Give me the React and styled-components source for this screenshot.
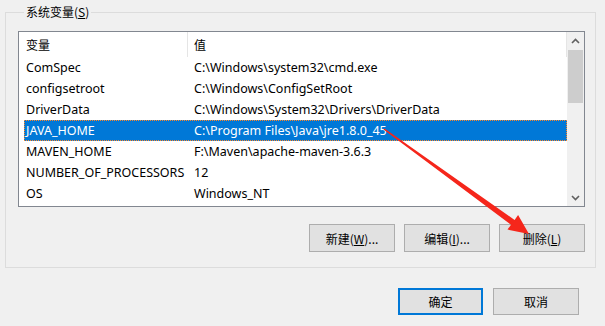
import React from "react";
import styled, { createGlobalStyle } from "styled-components";

const GlobalStyle = createGlobalStyle`
  html, body {
    margin: 0;
    padding: 0;
    background: #f0f0f0;
  }
  body {
    font-family: "Noto Sans", "Noto Sans CJK SC", sans-serif;
    font-size: 12px;
    color: #000;
  }
`;

const Dialog = styled.div`
  position: relative;
  width: 605px;
  height: 326px;
  box-sizing: border-box;
  padding: 3px 9px 0 5px;
  background: #f0f0f0;
  overflow: hidden;
`;

const GroupBox = styled.fieldset`
  margin: 0;
  padding: 0 10px 15px 12px;
  border: 1px solid #dcdcdc;
  min-width: 0;
`;

const Legend = styled.legend`
  padding: 0 2px;
  margin-left: 6px;
  line-height: 18px;
  font-family: "Noto Sans CJK SC", sans-serif;
`;

const ListBox = styled.div`
  margin-top: 10px;
  height: 176px;
  box-sizing: border-box;
  border: 1px solid #828790;
  background: #fff;
  display: flex;
`;

const ListBody = styled.div`
  flex: 1;
  min-width: 0;
  padding-left: 5px;
  font-size: 12.5px;
`;

const HeaderRow = styled.div`
  display: grid;
  grid-template-columns: 164px 1fr;
  height: 25px;
`;

const HeaderCell = styled.div`
  display: flex;
  align-items: center;
  padding-left: ${(p) => p.$pad}px;
  border-right: 1px solid #e5e5e5;
  font-family: "Noto Sans CJK SC", sans-serif;
  font-size: 12px;
`;

const Row = styled.div`
  display: grid;
  grid-template-columns: 168px 1fr;
  height: 21px;
  box-sizing: border-box;
  align-items: center;
  background: ${(p) => (p.$selected ? "#0078d7" : "transparent")};
  color: ${(p) => (p.$selected ? "#fff" : "#000")};
  border: 1px dotted ${(p) => (p.$selected ? "#ff8728" : "transparent")};
`;

const Cell = styled.div`
  padding: 0 1px;
  white-space: nowrap;
  overflow: hidden;
`;

const ScrollBar = styled.div`
  width: 17px;
  background: #f0f0f0;
  display: flex;
  flex-direction: column;
`;

const ScrollArrow = styled.div`
  height: 17px;
  display: flex;
  align-items: center;
  justify-content: center;
`;

const ScrollTrack = styled.div`
  flex: 1;
  padding: 1px 1px 0;
`;

const Thumb = styled.div`
  height: 53px;
  background: #cdcdcd;
`;

const ButtonRow = styled.div`
  display: flex;
  justify-content: flex-end;
  gap: ${(p) => p.$gap}px;
  margin-top: ${(p) => p.$top}px;
  margin-right: ${(p) => p.$right || 0}px;
`;

const Button = styled.button`
  width: ${(p) => p.$w || 86}px;
  height: ${(p) => p.$h || 28}px;
  box-sizing: border-box;
  background: #e1e1e1;
  border: ${(p) => (p.$default ? "2px solid #0078d7" : "1px solid #adadad")};
  font-family: "Noto Sans CJK SC", "Noto Sans", sans-serif;
  font-size: 12px;
  color: #000;
  padding: 0;
  cursor: default;
`;

const Arrow = styled.svg`
  position: absolute;
  left: 0;
  top: 0;
  pointer-events: none;
`;

const rows = [
  ["ComSpec", "C:\\Windows\\system32\\cmd.exe"],
  ["configsetroot", "C:\\Windows\\ConfigSetRoot"],
  ["DriverData", "C:\\Windows\\System32\\Drivers\\DriverData"],
  ["JAVA_HOME", "C:\\Program Files\\Java\\jre1.8.0_45"],
  ["MAVEN_HOME", "F:\\Maven\\apache-maven-3.6.3"],
  ["NUMBER_OF_PROCESSORS", "12"],
  ["OS", "Windows_NT"],
];

function Chevron({ up }) {
  return (
    <svg width="9" height="6" viewBox="0 0 9 6">
      <path
        d={up ? "M1 5 L4.5 1.5 L8 5" : "M1 1 L4.5 4.5 L8 1"}
        fill="none"
        stroke="#606060"
        strokeWidth="1.6"
      />
    </svg>
  );
}

export default function App() {
  return (
    <>
      <GlobalStyle />
      <Dialog>
        <GroupBox>
          <Legend>
            系统变量(<u>S</u>)
          </Legend>
          <ListBox>
            <ListBody>
              <HeaderRow>
                <HeaderCell $pad={2}>变量</HeaderCell>
                <HeaderCell $pad={6}>值</HeaderCell>
              </HeaderRow>
              {rows.map(([name, value]) => (
                <Row key={name} $selected={name === "JAVA_HOME"}>
                  <Cell>{name}</Cell>
                  <Cell>{value}</Cell>
                </Row>
              ))}
            </ListBody>
            <ScrollBar>
              <ScrollArrow>
                <Chevron up />
              </ScrollArrow>
              <ScrollTrack>
                <Thumb />
              </ScrollTrack>
              <ScrollArrow>
                <Chevron />
              </ScrollArrow>
            </ScrollBar>
          </ListBox>
          <ButtonRow $gap={9} $top={17}>
            <Button>
              新建(<u>W</u>)...
            </Button>
            <Button>
              编辑(<u>I</u>)...
            </Button>
            <Button>
              删除(<u>L</u>)
            </Button>
          </ButtonRow>
        </GroupBox>
        <ButtonRow $gap={10} $top={20} $right={17}>
          <Button $default $w={85} $h={27}>
            确定
          </Button>
          <Button $w={86} $h={27}>
            取消
          </Button>
        </ButtonRow>
        <Arrow width="605" height="326" viewBox="0 0 605 326">
          <polygon
            points="383.5,129.6 511,224.7 507.5,229.6 529,234 518.1,215 514.6,219.9 384.5,128.4"
            fill="#f5261b"
          />
        </Arrow>
      </Dialog>
    </>
  );
}
